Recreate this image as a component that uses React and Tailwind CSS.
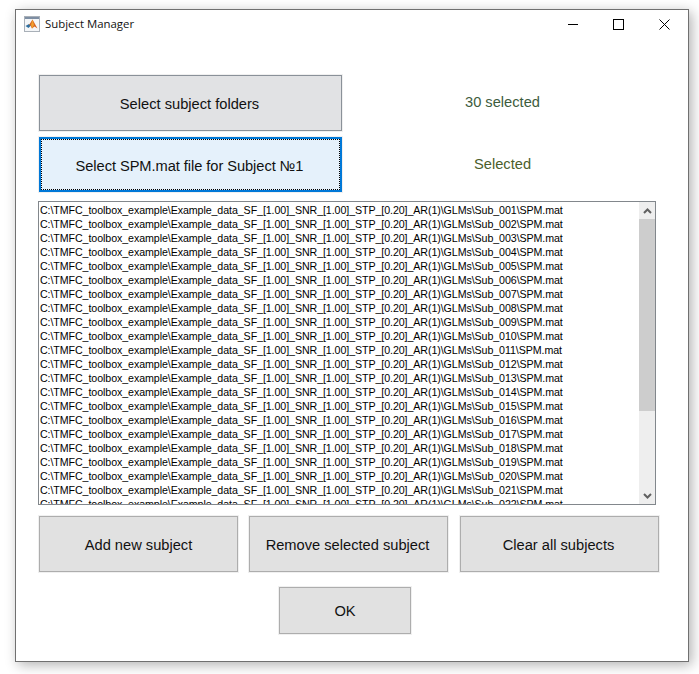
const subjects = Array.from({ length: 23 }, (_, i) => {
  const id = String(i + 1).padStart(3, '0');
  return `C:\\TMFC_toolbox_example\\Example_data_SF_[1.00]_SNR_[1.00]_STP_[0.20]_AR(1)\\GLMs\\Sub_${id}\\SPM.mat`;
});

const btn =
  "flex items-center justify-center border border-[#adadad] bg-[#e1e1e1] pt-px text-[14.67px] text-[#111] shadow-[0_0_0_1px_#f0f0f0]";

function MatlabIcon() {
  return (
    <svg width="16" height="16" viewBox="0 0 16 16" className="shrink-0">
      <rect x="0.5" y="0.5" width="15" height="15" fill="#f4f6f8" stroke="#a9b0b8" />
      <rect x="1" y="1" width="14" height="2" fill="#7d8ea3" />
      <path d="M1.5 10 L5 8 L7 9.5 L4.5 12 Z" fill="#2f6f9f" />
      <path d="M5 9 L8.5 3.5 L11 8 L13.5 12.5 L10.5 10.5 L8 12.5 L6.5 9.5 Z" fill="#d9651f" />
      <path d="M8.5 3.5 L10 9 L8 12.5 L7 9 Z" fill="#f0a030" />
    </svg>
  );
}

export default function App() {
  return (
    <div className="h-[674px] w-[699px] overflow-hidden bg-white pl-[15px] pt-[9px] font-['Liberation_Sans',Arial,sans-serif]">
      <div className="h-[653px] w-[674px] border border-[#707070] bg-white shadow-[3px_3px_12px_rgba(0,0,0,0.3)]">
        {/* Title bar */}
        <div className="flex h-[28px] items-center pl-[8px]">
          <MatlabIcon />
          <span className="ml-[5px] font-['Open_Sans',sans-serif] text-[11.4px] text-[#111]">Subject Manager</span>
          <div className="ml-auto mr-[18px] flex items-center">
            <svg width="11" height="11" viewBox="0 0 11 11">
              <path d="M0 5.5 H10" stroke="#000" strokeWidth="1" />
            </svg>
            <svg width="11" height="11" viewBox="0 0 11 11" className="ml-[34px]">
              <rect x="0.5" y="0.5" width="10" height="10" fill="none" stroke="#000" strokeWidth="1" />
            </svg>
            <svg width="11" height="11" viewBox="0 0 11 11" className="ml-[35px]">
              <path d="M0.5 0.5 L10.5 10.5 M10.5 0.5 L0.5 10.5" stroke="#000" strokeWidth="1" />
            </svg>
          </div>
        </div>

        <div className="pl-[23px] pt-[37px]">
          {/* Top buttons */}
          <div className="flex items-center">
            <button className={`${btn} h-[56px] w-[303px] !border-[#8a9199] !bg-[#e1e2e4] pr-[2px]`}>Select subject folders</button>
            <span className="mb-[2px] ml-[123px] text-[14.67px] text-[#3d5c3d]">30 selected</span>
          </div>
          <div className="mt-[6px] flex items-center">
            <button className="flex h-[55px] w-[303px] items-center justify-center border-2 border-[#0078d7] bg-[#e5f1fb] pr-[2px] pt-[2px] text-[14.67px] tracking-[-0.06px] text-[#111] shadow-[0_0_0_1px_#f0f0f0] outline-1 -outline-offset-3 outline-dotted outline-black">
              Select SPM.mat file for Subject №1
            </button>
            <span className="mb-[2px] ml-[132px] text-[14.67px] text-[#4b5e2c]">Selected</span>
          </div>

          {/* Subject list */}
          <div className="-ml-px mt-[9px] flex h-[304px] w-[618px] overflow-hidden border border-[#82878c]">
            <div className="h-full flex-1 overflow-hidden pl-px pt-px">
              {subjects.map((s) => (
                <div key={s} className="h-[14px] whitespace-nowrap text-[10.67px] leading-[14px] tracking-[-0.084px] text-black">
                  {s}
                </div>
              ))}
            </div>
            <div className="flex h-full w-[16px] flex-col bg-[#eeeeee]">
              <div className="flex h-[17px] items-center justify-center">
                <svg width="9" height="6" viewBox="0 0 9 6">
                  <path d="M1 5 L4.5 1.5 L8 5" fill="none" stroke="#606060" strokeWidth="2" />
                </svg>
              </div>
              <div className="h-[192px] bg-[#cdcdcd]" />
              <div className="mt-auto flex h-[17px] items-center justify-center">
                <svg width="9" height="6" viewBox="0 0 9 6">
                  <path d="M1 1 L4.5 4.5 L8 1" fill="none" stroke="#606060" strokeWidth="2" />
                </svg>
              </div>
            </div>
          </div>

          {/* Bottom buttons */}
          <div className="mt-[11px] flex gap-[11px]">
            <button className={`${btn} h-[56px] w-[199px]`}>Add new subject</button>
            <button className={`${btn} h-[56px] w-[199px] pr-[2px]`}>Remove selected subject</button>
            <button className={`${btn} ml-px h-[56px] w-[199px] pr-[2px]`}>Clear all subjects</button>
          </div>
          <div className="mt-[15px] pl-[240px]">
            <button className={`${btn} h-[47px] w-[132px]`}>OK</button>
          </div>
        </div>
      </div>
    </div>
  );
}
